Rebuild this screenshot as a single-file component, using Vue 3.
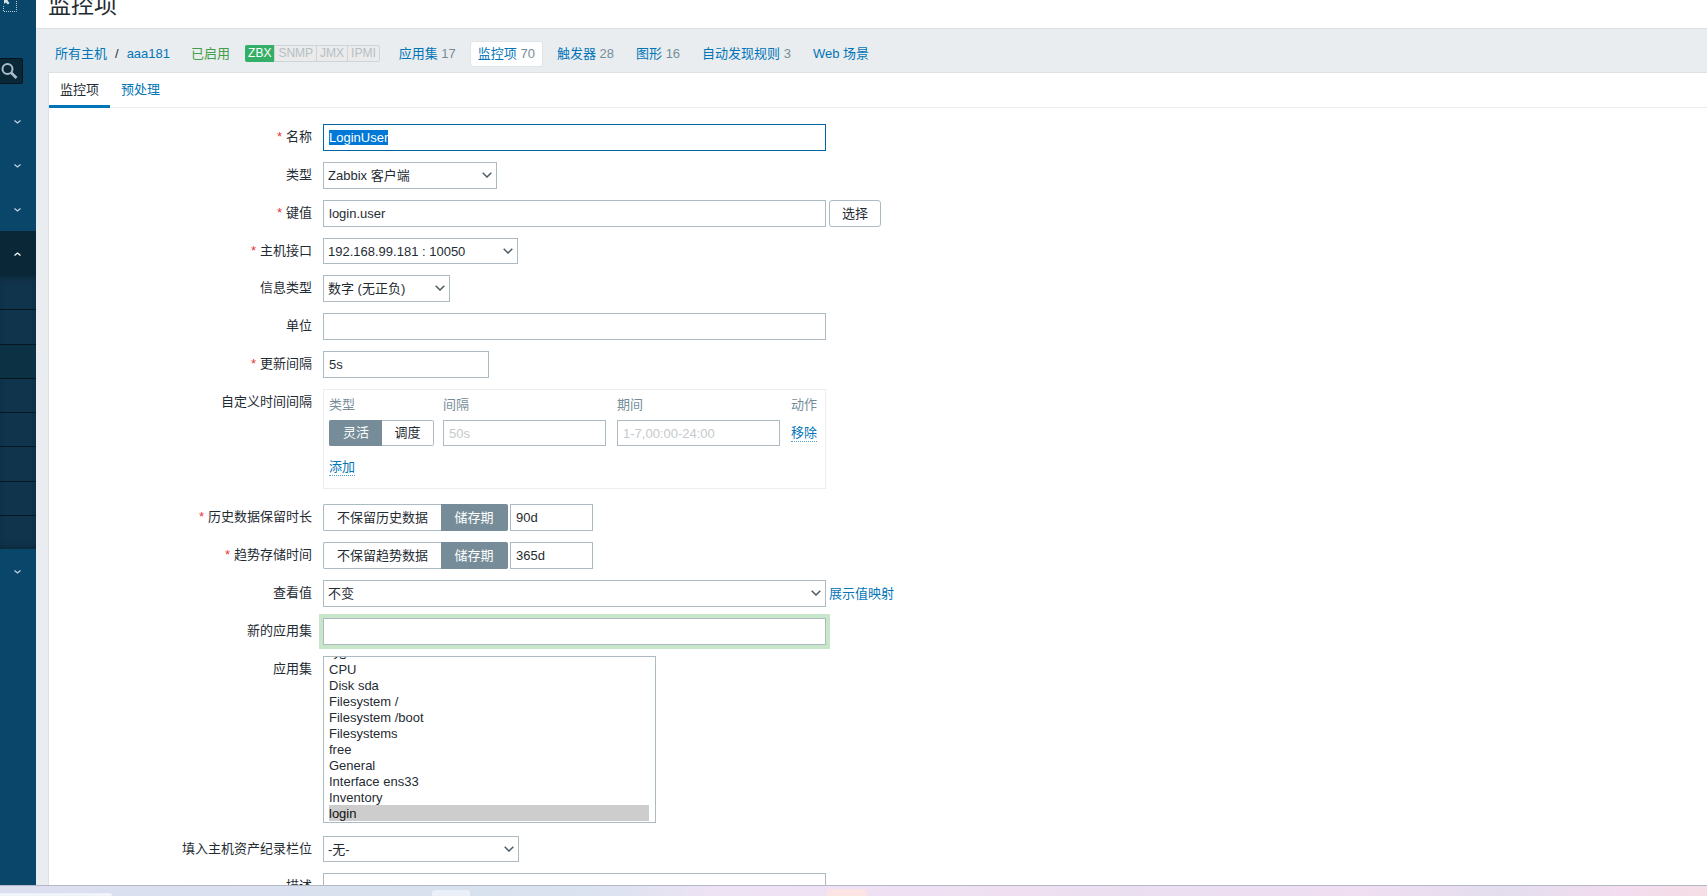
<script setup>
import { ref, onMounted } from 'vue'

const navLinks = [
  { label: '应用集', count: 17 },
  { label: '监控项', count: 70, current: true },
  { label: '触发器', count: 28 },
  { label: '图形', count: 16 },
  { label: '自动发现规则', count: 3 },
  { label: 'Web 场景' }
]
const apps = [
  '-无-', 'CPU', 'Disk sda', 'Filesystem /', 'Filesystem /boot', 'Filesystems',
  'free', 'General', 'Interface ens33', 'Inventory', 'login'
]
const subItems = [1, 2, 3, 4, 5, 6, 7, 8]

const name = ref('LoginUser')
const key = ref('login.user')
const units = ref('')
const delay = ref('5s')
const intervalType = ref('flexible')
const historyMode = ref('store')
const history = ref('90d')
const trendsMode = ref('store')
const trends = ref('365d')
const newApp = ref('')
const chosenApps = ref(['login'])

const nameInput = ref(null)
const appList = ref(null)
onMounted(() => {
  nameInput.value.focus()
  nameInput.value.select()
  appList.value.scrollTop = appList.value.scrollHeight
})
</script>

<template>
  <div class="screen">
    <div class="workspace">
      <aside class="sidebar">
        <div class="side-top">
          <button class="icon-btn" type="button" aria-label="收起菜单">
            <svg width="14" height="14" viewBox="0 0 14 14" fill="none">
              <path d="M.5 8V13.500H13.500V0" stroke="#b9cad5" stroke-dasharray="1 1" />
              <path d="M1 0v6l1.600-1.500L5 6.500 6.500 5 4.500 2.500 6 1V0z" fill="#d5e0e7" />
            </svg>
          </button>
        </div>
        <button class="side-search" type="button" aria-label="搜索">
          <svg width="18" height="18" viewBox="0 0 18 18" fill="none" stroke="#a9bccb">
            <circle cx="7.500" cy="7" r="5" stroke-width="2" />
            <path d="M11 10.500l5.500 5.500" stroke-width="2.600" />
          </svg>
        </button>
        <nav class="side-menu">
          <button v-for="n in 3" :key="n" class="side-item" type="button" aria-label="展开">
            <svg width="7" height="4" viewBox="0 0 7 4"><path d="M.5.500l3 2.500 3-2.500" /></svg>
          </button>
          <button class="side-item open" type="button" aria-label="收起">
            <svg width="7" height="4" viewBox="0 0 7 4"><path d="M.5 3.500l3-2.500 3 2.500" /></svg>
          </button>
          <div class="side-sub">
            <span v-for="n in subItems" :key="n" :class="{ selected: n === 3 }"></span>
          </div>
          <button class="side-item" type="button" aria-label="展开">
            <svg width="7" height="4" viewBox="0 0 7 4"><path d="M.5.500l3 2.500 3-2.500" /></svg>
          </button>
        </nav>
      </aside>

      <main class="content">
        <header class="title-bar"><h1>监控项</h1></header>

        <nav class="crumbs">
          <a href="#">所有主机</a>
          <span class="slash">/</span>
          <a href="#">aaa181</a>
          <span class="enabled">已启用</span>
          <span class="badges">
            <span class="on">ZBX</span><span>SNMP</span><span>JMX</span><span>IPMI</span>
          </span>
          <span class="links">
            <a v-for="l in navLinks" :key="l.label" href="#" :class="{ current: l.current }">
              {{ l.label }} <small v-if="l.count">{{ l.count }}</small>
            </a>
          </span>
        </nav>

        <section class="panel">
          <div class="tabs">
            <a href="#" class="active">监控项</a>
            <a href="#">预处理</a>
          </div>

          <form class="form" @submit.prevent>
            <div class="row">
              <label class="cap req" for="name">名称</label>
              <div class="field"><input id="name" ref="nameInput" v-model="name" class="wide" type="text"></div>
            </div>
            <div class="row">
              <label class="cap" for="type">类型</label>
              <div class="field">
                <span class="pick w-type">
                  <select id="type"><option>Zabbix 客户端</option></select>
                  <svg width="10" height="6" viewBox="0 0 10 6"><path d="M.7.700L5 5 9.300.700" /></svg>
                </span>
              </div>
            </div>
            <div class="row">
              <label class="cap req" for="key">键值</label>
              <div class="field">
                <input id="key" v-model="key" class="wide" type="text">
                <button class="btn" type="button">选择</button>
              </div>
            </div>
            <div class="row">
              <label class="cap req" for="iface">主机接口</label>
              <div class="field">
                <span class="pick w-iface low">
                  <select id="iface"><option>192.168.99.181 : 10050</option></select>
                  <svg width="10" height="6" viewBox="0 0 10 6"><path d="M.7.700L5 5 9.300.700" /></svg>
                </span>
              </div>
            </div>
            <div class="row">
              <label class="cap" for="vtype">信息类型</label>
              <div class="field">
                <span class="pick w-info">
                  <select id="vtype"><option>数字 (无正负)</option></select>
                  <svg width="10" height="6" viewBox="0 0 10 6"><path d="M.7.700L5 5 9.300.700" /></svg>
                </span>
              </div>
            </div>
            <div class="row">
              <label class="cap" for="units">单位</label>
              <div class="field"><input id="units" v-model="units" class="wide" type="text"></div>
            </div>
            <div class="row">
              <label class="cap req" for="delay">更新间隔</label>
              <div class="field"><input id="delay" v-model="delay" class="w-delay" type="text"></div>
            </div>
            <div class="row roomy">
              <span class="cap">自定义时间间隔</span>
              <div class="box">
                <table>
                  <thead>
                    <tr><th class="c1">类型</th><th class="c2">间隔</th><th class="c2">期间</th><th>动作</th></tr>
                  </thead>
                  <tbody>
                    <tr>
                      <td>
                        <span class="seg low">
                          <label class="s-a"><input v-model="intervalType" type="radio" name="itype" value="flexible"><span>灵活</span></label>
                          <label class="s-b"><input v-model="intervalType" type="radio" name="itype" value="scheduling"><span>调度</span></label>
                        </span>
                      </td>
                      <td><input class="w-int low" type="text" placeholder="50s" aria-label="间隔"></td>
                      <td><input class="w-int low" type="text" placeholder="1-7,00:00-24:00" aria-label="期间"></td>
                      <td><button class="link-btn" type="button">移除</button></td>
                    </tr>
                    <tr class="add"><td colspan="4"><button class="link-btn" type="button">添加</button></td></tr>
                  </tbody>
                </table>
              </div>
            </div>
            <div class="row">
              <label class="cap req" for="history">历史数据保留时长</label>
              <div class="field tight">
                <span class="seg">
                  <label class="s-off"><input v-model="historyMode" type="radio" name="hmode" value="off"><span>不保留历史数据</span></label>
                  <label class="s-on"><input v-model="historyMode" type="radio" name="hmode" value="store"><span>储存期</span></label>
                </span>
                <input id="history" v-model="history" class="w-period" type="text">
              </div>
            </div>
            <div class="row">
              <label class="cap req" for="trends">趋势存储时间</label>
              <div class="field tight">
                <span class="seg">
                  <label class="s-off"><input v-model="trendsMode" type="radio" name="tmode" value="off"><span>不保留趋势数据</span></label>
                  <label class="s-on"><input v-model="trendsMode" type="radio" name="tmode" value="store"><span>储存期</span></label>
                </span>
                <input id="trends" v-model="trends" class="w-period" type="text">
              </div>
            </div>
            <div class="row">
              <label class="cap" for="valuemap">查看值</label>
              <div class="field">
                <span class="pick wide">
                  <select id="valuemap"><option>不变</option></select>
                  <svg width="10" height="6" viewBox="0 0 10 6"><path d="M.7.700L5 5 9.300.700" /></svg>
                </span>
                <a href="#">展示值映射</a>
              </div>
            </div>
            <div class="row">
              <label class="cap" for="newapp">新的应用集</label>
              <div class="field"><input id="newapp" v-model="newApp" class="wide glow" type="text"></div>
            </div>
            <div class="row list-row">
              <label class="cap" for="apps">应用集</label>
              <div class="field">
                <select id="apps" ref="appList" v-model="chosenApps" class="listbox" multiple>
                  <option v-for="a in apps" :key="a" :value="a">{{ a }}</option>
                </select>
              </div>
            </div>
            <div class="row">
              <label class="cap" for="inventory">填入主机资产纪录栏位</label>
              <div class="field">
                <span class="pick w-inv low">
                  <select id="inventory"><option>-无-</option></select>
                  <svg width="10" height="6" viewBox="0 0 10 6"><path d="M.7.700L5 5 9.300.700" /></svg>
                </span>
              </div>
            </div>
            <div class="row">
              <label class="cap" for="desc">描述</label>
              <div class="field"><textarea id="desc" class="wide" rows="7"></textarea></div>
            </div>
          </form>
        </section>
      </main>
    </div>

    <footer class="taskbar">
      <span class="t-search"></span>
      <span class="t-app"></span>
      <span class="t-app warm"></span>
    </footer>
  </div>
</template>

<style>
body {
  margin: 0;
  overflow: hidden;
}
</style>

<style scoped>
.screen,
.screen * {
  box-sizing: border-box;
}
.screen {
  display: flex;
  flex-direction: column;
  height: 100vh;
  overflow: hidden;
  background: #fff;
  color: #1f2c33;
  font: 13px/16px "Liberation Sans", Arial, "Noto Sans CJK SC", sans-serif;
}
a {
  color: #0275b8;
  text-decoration: none;
}
button,
input,
select,
textarea {
  margin: 0;
  font: inherit;
  color: inherit;
}
.workspace {
  flex: 1;
  min-height: 0;
  display: flex;
  overflow: hidden;
}

/* sidebar */
.sidebar {
  flex: none;
  width: 36px;
  background: #0a466a;
}
.side-top {
  height: 58px;
  padding-left: 3px;
  overflow: hidden;
}
.icon-btn {
  display: block;
  padding: 0;
  border: 0;
  background: none;
  margin-top: -2px;
}
.icon-btn svg {
  display: block;
}
.side-search {
  display: flex;
  align-items: center;
  width: 23px;
  height: 26px;
  padding: 0;
  border: 1px solid #06141c;
  border-left: 0;
  border-radius: 0 2px 2px 0;
  background: #0a2737;
}
.side-menu {
  display: flex;
  flex-direction: column;
  padding-top: 15px;
}
.side-item {
  display: flex;
  align-items: center;
  height: 44px;
  padding: 1px 0 0 14px;
  border: 0;
  background: none;
}
.side-item.open {
  height: 45px;
  background: #0a2737;
}
.side-item path {
  fill: none;
  stroke: #c3d2dc;
  stroke-width: 1.3;
}
.side-item.open path {
  stroke: #fff;
}
.side-sub {
  display: flex;
  flex-direction: column;
  height: 273px;
  background: #11344d;
  box-shadow: inset 0 6px 6px -4px #0a2737, inset 0 -6px 6px -4px #0a2737;
}
.side-sub span {
  flex: 1;
  border-bottom: 1px solid #05161f;
}
.side-sub span:last-child {
  border-bottom: 0;
}
.side-sub .selected {
  background: #0c3044;
}

/* header */
.content {
  flex: 1;
  min-width: 0;
  display: flex;
  flex-direction: column;
  background: #e9edf0;
}
.title-bar {
  flex: none;
  display: flex;
  align-items: flex-end;
  height: 29px;
  padding: 0 12px 11px;
  overflow: hidden;
  background: #fff;
  border-bottom: 1px solid #dce2e4;
}
h1 {
  margin: 0;
  font-size: 23px;
  line-height: 24px;
  font-weight: 400;
}
.crumbs {
  flex: none;
  display: flex;
  align-items: center;
  height: 43px;
  padding: 6px 0 0 19px;
  white-space: nowrap;
}
.slash {
  margin: 0 8px;
}
.enabled {
  margin: 0 15px 0 21px;
  color: #429e47;
}
.badges {
  display: flex;
  margin-right: 12px;
  border: 1px solid #ccd5d9;
  border-radius: 2px;
  background: #ebebeb;
  color: #b5c0c6;
  font-size: 12px;
  line-height: 15px;
}
.badges span {
  padding: 0 3px;
  border-left: 1px solid #ccd5d9;
}
.badges .on {
  margin: -1px 0 -1px -1px;
  padding: 1px 3px;
  border: 0;
  border-radius: 2px 0 0 2px;
  background: #34af67;
  color: #fff;
}
.links {
  display: flex;
  gap: 8px;
}
.links a {
  padding: 4px 7px;
  border-radius: 2px;
}
.links .current {
  background: #fff;
  box-shadow: 0 0 0 1px #dfe4e7;
}
small {
  font-size: 13px;
  color: #768d99;
}

/* panel */
.panel {
  flex: 1;
  min-height: 0;
  margin-left: 12px;
  overflow: hidden;
  background: #fff;
  border-top: 1px solid #dce2e4;
  border-left: 1px solid #dce2e4;
}
.tabs {
  display: flex;
  height: 35px;
  border-bottom: 1px solid #ebeef0;
}
.tabs a {
  height: 35px;
  padding: 0 11px;
  line-height: 34px;
}
.tabs .active {
  color: #1f2c33;
  border-bottom: 3px solid #0275b8;
}

/* form */
.form {
  padding-top: 16px;
}
.row {
  display: grid;
  grid-template-columns: 263px minmax(0, 1fr);
  column-gap: 11px;
  align-items: start;
  margin-bottom: 11px;
}
.roomy {
  margin-bottom: 15px;
}
.list-row {
  margin-bottom: 13px;
}
.cap {
  height: 26px;
  line-height: 26px;
  text-align: right;
}
.req::before {
  content: "*";
  margin-right: 4px;
  color: #e33734;
}
.field {
  display: flex;
  align-items: center;
  gap: 3px;
}
.field.tight {
  gap: 2px;
}
input[type="text"],
textarea {
  height: 27px;
  padding: 0 5px;
  border: 1px solid #acbbc2;
  border-radius: 0;
  outline: 0;
  background: #fff;
}
textarea {
  height: 120px;
  resize: none;
}
input[type="text"]:focus {
  border-color: #02659f;
}
input::selection {
  background: #0078d7;
  color: #fff;
}
input::placeholder {
  color: #c4c9cc;
}
.wide {
  width: 503px;
}
.w-type {
  width: 174px;
}
.w-iface {
  width: 195px;
}
.w-info {
  width: 127px;
}
.w-inv {
  width: 196px;
}
.w-delay {
  width: 166px;
}
.w-period {
  width: 83px;
}
.w-int {
  width: 163px;
}
.pick {
  position: relative;
  display: block;
  height: 27px;
}
.pick select {
  width: 100%;
  height: 100%;
  padding: 1px 20px 0 4px;
  appearance: none;
  border: 1px solid #acbbc2;
  border-radius: 0;
  background: #fff;
}
.pick svg {
  position: absolute;
  right: 5px;
  top: 10px;
  fill: none;
  stroke: #4f5b62;
  stroke-width: 1.5;
  pointer-events: none;
}
.pick.low,
.seg.low,
input[type="text"].low {
  height: 26px;
}
.btn {
  height: 27px;
  padding: 0 12px;
  border: 1px solid #acbbc2;
  border-radius: 3px;
  background: #fff;
}
.glow {
  box-shadow: 0 0 0 4px #c8e6c9;
}

/* segmented radios */
.seg {
  display: inline-flex;
  height: 27px;
  vertical-align: top;
}
.seg label {
  position: relative;
  display: flex;
}
.seg input {
  position: absolute;
  opacity: 0;
}
.seg span {
  flex: 1;
  display: flex;
  align-items: center;
  justify-content: center;
  border: 1px solid #acbbc2;
}
.seg label:first-child span {
  border-right: 0;
  border-radius: 2px 0 0 2px;
}
.seg label:last-child span {
  border-left: 0;
  border-radius: 0 2px 2px 0;
}
.seg input:checked + span {
  background: #768d99;
  border-color: #768d99;
  color: #fff;
}
.s-a {
  width: 53px;
}
.s-b {
  width: 52px;
}
.s-off {
  width: 118px;
}
.s-on {
  width: 67px;
}

/* custom intervals */
.box {
  width: 503px;
  height: 100px;
  padding-left: 5px;
  border: 1px solid #ebeef0;
}
table {
  width: 100%;
  table-layout: fixed;
  border-collapse: collapse;
}
th,
td {
  padding: 0;
  text-align: left;
  font-weight: 400;
}
th {
  height: 30px;
  color: #768d99;
}
td {
  height: 26px;
}
td > input {
  display: block;
}
.c1 {
  width: 114px;
}
.c2 {
  width: 174px;
}
.add td {
  height: 42px;
}
.link-btn {
  padding: 0;
  border: 0;
  border-bottom: 1px dotted #4f9fce;
  background: none;
  color: #0275b8;
  line-height: 16px;
}

/* applications list */
.listbox {
  width: 333px;
  height: 167px;
  padding: 0 6px 1px 5px;
  border: 1px solid #acbbc2;
  border-radius: 0;
  outline: 0;
  background: #fff;
  scrollbar-width: none;
}
.listbox option {
  display: flex;
  align-items: flex-end;
  height: 16px;
  min-height: 16px;
  padding: 0;
  overflow: hidden;
}
.listbox option:checked {
  background: #cdcdcd;
}

/* taskbar */
.taskbar {
  flex: none;
  display: flex;
  align-items: flex-end;
  height: 11px;
  border-top: 1px solid #b5b8c6;
  background: linear-gradient(90deg, #dcdff0, #d8e1ee 28%, #dde3f0 36%, #eee3f5 42%, #efdff1 60%, #eadff0 66%, #f0def2 80%, #e3deee 88%, #f3dcef 95%, #f5dee4);
  overflow: hidden;
}
.t-search {
  width: 112px;
  height: 3px;
  border-radius: 0 3px 0 0;
  background: #f1f3fa;
}
.t-app {
  width: 38px;
  height: 6px;
  margin-left: 320px;
  border-radius: 3px 3px 0 0;
  background: #ebeff8;
}
.t-app.warm {
  width: 40px;
  height: 7px;
  margin-left: 357px;
  background: #fde4e4;
}
</style>
